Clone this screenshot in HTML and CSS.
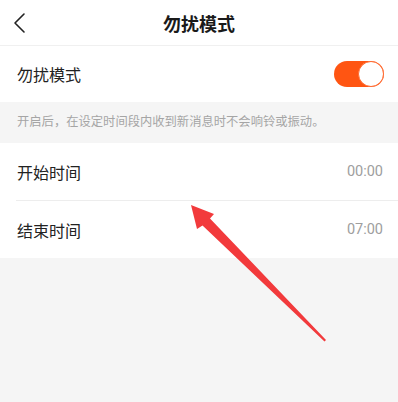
FILE: index.html
```html
<!DOCTYPE html>
<html lang="zh">
<head>
<meta charset="utf-8">
<link rel="stylesheet" href="styles.css">
</head>
<body>
<div class="page">
  <header class="nav">
    <div class="back">
      <svg width="14" height="22" viewBox="0 0 14 22"><path d="M11 2 L2 11 L11 20" fill="none" stroke="#222" stroke-width="1.6" stroke-linecap="round" stroke-linejoin="round"/></svg>
    </div>
    <div class="title">勿扰模式</div>
    <div></div>
  </header>
  <section class="group">
    <div class="row first">
      <span class="label">勿扰模式</span>
      <span class="toggle"><span class="knob"></span></span>
    </div>
  </section>
  <div class="note">开启后，在设定时间段内收到新消息时不会响铃或振动。</div>
  <section class="group">
    <div class="row">
      <span class="label">开始时间</span>
      <span class="value">00:00</span>
    </div>
    <div class="row divided">
      <span class="label">结束时间</span>
      <span class="value">07:00</span>
    </div>
  </section>
  <svg class="arrow" width="398" height="402" viewBox="0 0 398 402">
    <polygon points="191,205 214,214 210,218.5 326,340 324.5,341.5 202.5,225.5 197,229" fill="#f23a3c"/>
  </svg>
</div>
</body>
</html>
```

FILE: styles.css
```css
html, body {
  margin: 0;
  padding: 0;
  background: #f5f5f5;
  font-family: "Noto Sans CJK SC", "Noto Sans", sans-serif;
  color: #222;
}
.page {
  position: relative;
  width: 398px;
  height: 402px;
  overflow: hidden;
}
.nav {
  height: 45px;
  background: #fff;
  border-bottom: 1px solid #f0f0f0;
  display: grid;
  grid-template-columns: 1fr auto 1fr;
  align-items: center;
}
.back {
  padding-left: 13px;
  display: flex;
  align-items: center;
  padding-top: 1px;
}
.title {
  font-size: 18px;
  font-weight: bold;
  line-height: 1;
  color: #1a1a1a;
}
.group {
  background: #fff;
}
.row {
  height: 57px;
  display: flex;
  align-items: center;
  justify-content: space-between;
  padding: 0 15px 0 17px;
}
.row.first {
  height: 56px;
  padding-right: 14px;
}
.row.divided {
  position: relative;
  height: 58px;
  box-sizing: border-box;
  padding-top: 1px;
}
.row.divided::before {
  content: "";
  position: absolute;
  left: 16px;
  right: 0;
  top: 0;
  height: 1px;
  background: #ededed;
}
.label {
  font-size: 16px;
  line-height: 1;
  color: #222;
}
.value {
  font-size: 14.5px;
  color: #9e9e9e;
  font-family: "Roboto", "Noto Sans", sans-serif;
}
.toggle {
  width: 50px;
  height: 26px;
  border-radius: 13px;
  background: #ff5512;
  display: flex;
  justify-content: flex-end;
  align-items: center;
  box-sizing: border-box;
}
.knob {
  width: 26px;
  height: 26px;
  box-sizing: border-box;
  border-radius: 50%;
  background: #fff;
  border: 1px solid #ff6a30;
}
.note {
  height: 41px;
  box-sizing: border-box;
  padding-bottom: 3px;
  display: flex;
  align-items: center;
  padding-left: 17px;
  font-size: 12.3px;
  color: #a5a5a5;
  background: #f5f5f5;
}
.arrow {
  position: absolute;
  left: 0;
  top: 0;
  pointer-events: none;
}
```
